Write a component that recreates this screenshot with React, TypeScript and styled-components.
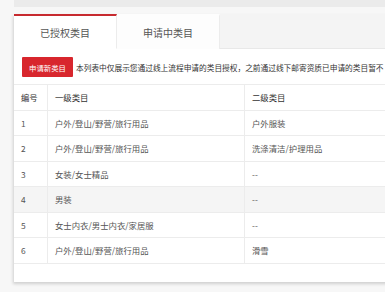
import styled, { createGlobalStyle } from "styled-components";

const GlobalStyle = createGlobalStyle`
  html, body {
    margin: 0;
    padding: 0;
    background: #f7f7f7;
    font-family: "Noto Sans CJK SC", "Noto Sans", "Liberation Sans", sans-serif;
    overflow: hidden;
  }
`;

const Page = styled.div`
  width: 385px;
  height: 292px;
  padding-left: 14px;
  box-sizing: border-box;
  overflow: hidden;
`;

const TopStrip = styled.div`
  height: 7px;
  background: #ebebeb;
  margin-bottom: 7px;
`;

const Card = styled.div`
  width: 420px;
  height: 268px;
  background: #fff;
  box-shadow: -1px 2px 3px rgba(0, 0, 0, 0.16);
  display: flex;
  flex-direction: column;
`;

const TabBar = styled.div`
  display: flex;
  height: 34px;
  background: #f4f4f4;
  border-bottom: 1px solid #e8e8e8;
`;

const Tab = styled.div<{ $active?: boolean }>`
  width: 103px;
  display: flex;
  align-items: center;
  justify-content: center;
  font-size: 10px;
  color: #555;
  background: ${(p) => (p.$active ? "#fff" : "#fdfdfd")};
  border-top: 2px solid ${(p) => (p.$active ? "#c72a2f" : "transparent")};
  border-right: 1px solid #ececec;
  box-sizing: border-box;
  margin-bottom: -1px;
  ${(p) => p.$active && "border-bottom: 1px solid #fff;"}
`;

const Toolbar = styled.div`
  display: flex;
  align-items: center;
  padding: 8px 0 7px 8px;
  gap: 3px;
`;

const Button = styled.div`
  width: 51px;
  height: 20px;
  flex-shrink: 0;
  background: #d8262d;
  color: #fff;
  font-size: 7.4px;
  display: flex;
  align-items: center;
  justify-content: center;
  border-radius: 1px;
`;

const Note = styled.div`
  font-size: 7.7px;
  color: #333;
  white-space: nowrap;
`;

const Table = styled.div`
  display: flex;
  flex-direction: column;
  border-top: 1px solid #ececec;
`;

const Row = styled.div<{ $shade?: boolean; $head?: boolean }>`
  display: grid;
  grid-template-columns: 34px 197px 1fr;
  height: 25.5px;
  box-sizing: border-box;
  border-bottom: 1px solid #ececec;
  background: ${(p) => (p.$shade ? "#f5f5f5" : "#fff")};
  color: ${(p) => (p.$head ? "#333" : "#555")};
`;

const Cell = styled.div<{ $divider?: boolean }>`
  display: flex;
  align-items: center;
  padding-left: 7px;
  font-size: 8.4px;
  white-space: nowrap;
  border-right: ${(p) => (p.$divider ? "1px solid #ececec" : "none")};
`;

const rows = [
  { id: "1", a: "户外/登山/野营/旅行用品", b: "户外服装" },
  { id: "2", a: "户外/登山/野营/旅行用品", b: "洗涤清洁/护理用品" },
  { id: "3", a: "女装/女士精品", b: "--" },
  { id: "4", a: "男装", b: "--" },
  { id: "5", a: "女士内衣/男士内衣/家居服", b: "--" },
  { id: "6", a: "户外/登山/野营/旅行用品", b: "滑雪" },
];

export default function App() {
  return (
    <>
      <GlobalStyle />
      <Page>
        <TopStrip />
        <Card>
          <TabBar>
            <Tab $active>已授权类目</Tab>
            <Tab>申请中类目</Tab>
          </TabBar>
          <Toolbar>
            <Button>申请新类目</Button>
            <Note>
              本列表中仅展示您通过线上流程申请的类目授权，之前通过线下邮寄资质已申请的类目暂不
            </Note>
          </Toolbar>
          <Table>
            <Row $head>
              <Cell $divider>编号</Cell>
              <Cell $divider>一级类目</Cell>
              <Cell>二级类目</Cell>
            </Row>
            {rows.map((r) => (
              <Row key={r.id} $shade={r.id === "4"}>
                <Cell $divider>{r.id}</Cell>
                <Cell $divider>{r.a}</Cell>
                <Cell>{r.b}</Cell>
              </Row>
            ))}
          </Table>
        </Card>
      </Page>
    </>
  );
}
